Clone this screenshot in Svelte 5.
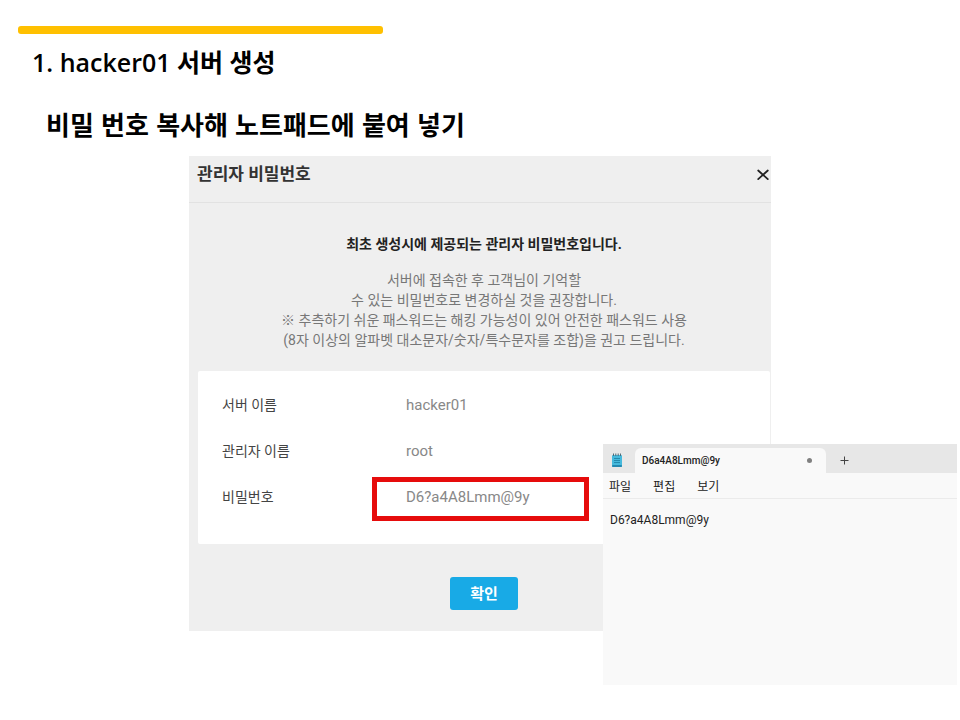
<script lang="ts">
    const details = [
        { label: "서버 이름", value: "hacker01" },
        { label: "관리자 이름", value: "root" },
        { label: "비밀번호", value: "D6?a4A8Lmm@9y", highlight: true },
    ];

    const menus = ["파일", "편집", "보기"];

    let note = $state("D6?a4A8Lmm@9y");
</script>

<main class="slide">
    <div class="accent"></div>
    <h1>1. hacker01 서버 생성</h1>
    <h2>비밀 번호 복사해 노트패드에 붙여 넣기</h2>

    <div class="stage">
        <section class="dialog" aria-labelledby="dialog-title">
            <header class="dialog-header">
                <h3 id="dialog-title">관리자 비밀번호</h3>
                <button class="close-btn" aria-label="닫기">
                    <svg width="14" height="14" viewBox="0 0 14 14" fill="none" stroke="currentColor" stroke-width="1.8" stroke-linecap="round">
                        <path d="M2.2 3.5l9.6 8.6M11.8 3.5l-9.6 8.6"></path>
                    </svg>
                </button>
            </header>

            <div class="dialog-body">
                <p class="lead">최초 생성시에 제공되는 관리자 비밀번호입니다.</p>
                <p class="description">
                    서버에 접속한 후 고객님이 기억할<br />
                    수 있는 비밀번호로 변경하실 것을 권장합니다.<br />
                    ※ 추측하기 쉬운 패스워드는 해킹 가능성이 있어 안전한 패스워드 사용<br />
                    (8자 이상의 알파벳 대소문자/숫자/특수문자를 조합)을 권고 드립니다.
                </p>

                <dl class="card">
                    {#each details as item}
                        <div class="row">
                            <dt>{item.label}</dt>
                            <dd class:highlight={item.highlight}>{item.value}</dd>
                        </div>
                    {/each}
                </dl>

                <button class="confirm-btn">확인</button>
            </div>
        </section>

        <section class="notepad" aria-label="메모장">
            <div class="tab-bar">
                <svg class="app-icon" width="12" height="14" viewBox="0 0 12 14">
                    <rect x="1" y="2" width="10" height="12" rx="1" fill="#45b9dc"></rect>
                    <rect x="1" y="12" width="10" height="2" rx="1" fill="#2388b0"></rect>
                    <path d="M2.5 0.5v2.5M4.8 0.5v2.5M7.2 0.5v2.5M9.5 0.5v2.5" stroke="#4d6c7a" stroke-width="1"></path>
                    <path d="M3 5.5h6M3 7.5h6M3 9.5h6" stroke="#1b7da2" stroke-width="0.8"></path>
                </svg>
                <button class="tab">
                    <span>D6a4A8Lmm@9y</span>
                    <span class="unsaved"></span>
                </button>
                <button class="new-tab" aria-label="새 탭">
                    <svg width="9" height="9" viewBox="0 0 9 9" stroke="#444444" stroke-width="1">
                        <path d="M4.5 0.5v8M0.5 4.5h8"></path>
                    </svg>
                </button>
            </div>
            <nav class="menu-bar">
                {#each menus as menu}
                    <button>{menu}</button>
                {/each}
            </nav>
            <textarea aria-label="텍스트 편집기" spellcheck="false" bind:value={note}></textarea>
        </section>
    </div>
</main>

<style>
    :global(body) {
        margin: 0;
        background: #ffffff;
    }

    .slide {
        padding: 26px 0 32px;
        font-family: "Open Sans", "Noto Sans CJK KR", sans-serif;
        color: #000000;
    }

    h1,
    h2,
    h3,
    p,
    dl,
    dd {
        margin: 0;
    }

    button {
        padding: 0;
        border: none;
        background: none;
        font-family: inherit;
        color: inherit;
        cursor: pointer;
    }

    svg {
        display: block;
    }

    .accent {
        width: 38%;
        height: 8px;
        margin-left: 18px;
        border-radius: 3px;
        background: #ffc000;
    }

    h1,
    h2 {
        line-height: 32px;
    }

    h1 {
        margin: 12px 32px 0;
        font-size: 25px;
        font-weight: 600;
    }

    h2 {
        margin: 32px 46px 0;
        font-family: "Liberation Sans", "Noto Sans CJK KR", sans-serif;
        font-size: 26px;
        font-weight: 700;
    }

    .stage {
        position: relative;
        margin-top: 14px;
        min-height: 529px;
    }

    /* Password dialog */
    .dialog {
        max-width: 582px;
        margin: 0 auto;
        background: #efefef;
        font-family: Roboto, "Noto Sans CJK KR", sans-serif;
    }

    .dialog-header {
        display: flex;
        justify-content: space-between;
        align-items: center;
        padding: 6px 1px 16px 8px;
        border-bottom: 1px solid #e2e2e2;
    }

    h3 {
        font-size: 17px;
        font-weight: 700;
        line-height: 24px;
        color: #333333;
    }

    .close-btn {
        color: #222222;
    }

    .dialog-body {
        padding: 31px 1px 21px 9px;
        text-align: center;
    }

    .lead {
        font-size: 14px;
        font-weight: 700;
        line-height: 20px;
        color: #222222;
    }

    .description {
        margin-top: 16px;
        font-size: 14px;
        line-height: 20px;
        color: #777777;
    }

    .card {
        margin-top: 21px;
        padding: 11px 24px 24px;
        border-radius: 2px;
        background: #ffffff;
        text-align: left;
    }

    .row {
        display: flex;
        font-size: 14px;
        line-height: 46px;
    }

    dt {
        width: 184px;
        color: #444444;
    }

    dd {
        position: relative;
        font-size: 15px;
        color: #888888;
    }

    .highlight::after {
        content: "";
        position: absolute;
        top: 3px;
        left: -34px;
        width: 207px;
        height: 34px;
        border: 5px solid #e60c0c;
    }

    .confirm-btn {
        width: 68px;
        height: 33px;
        margin-top: 33px;
        padding-bottom: 2px;
        border-radius: 3px;
        background: #18aae6;
        font-size: 15px;
        font-weight: 700;
        color: #ffffff;
    }

    /* Notepad window on top of the dialog */
    .notepad {
        position: absolute;
        top: 288px;
        right: 3px;
        width: 354px;
        height: 241px;
        display: flex;
        flex-direction: column;
        background: #f9f9f9;
    }

    .tab-bar {
        display: flex;
        align-items: center;
        height: 29px;
        background: #e7e7e7;
    }

    .app-icon {
        margin: 2px 12px 0 8px;
    }

    .tab {
        display: flex;
        justify-content: space-between;
        align-items: center;
        align-self: flex-end;
        width: 191px;
        height: 25px;
        padding: 0 14px 0 7px;
        border-radius: 6px 6px 0 0;
        background: #f9f9f9;
        font-family: Roboto, sans-serif;
        font-size: 10px;
        font-weight: 500;
        color: #222222;
    }

    .unsaved {
        width: 5px;
        height: 5px;
        border-radius: 50%;
        background: #808080;
    }

    .new-tab {
        margin-left: 14px;
        padding-top: 4px;
    }

    .menu-bar {
        display: flex;
        gap: 22px;
        padding: 0 6px;
        border-bottom: 1px solid #ebebeb;
    }

    .menu-bar button {
        height: 25px;
        font-size: 12px;
        color: #222222;
    }

    textarea {
        flex: 1;
        padding: 12px 7px;
        border: none;
        outline: none;
        resize: none;
        background: transparent;
        font-family: Roboto, "Noto Sans CJK KR", sans-serif;
        font-size: 12px;
        line-height: 18px;
        color: #222222;
    }
</style>
